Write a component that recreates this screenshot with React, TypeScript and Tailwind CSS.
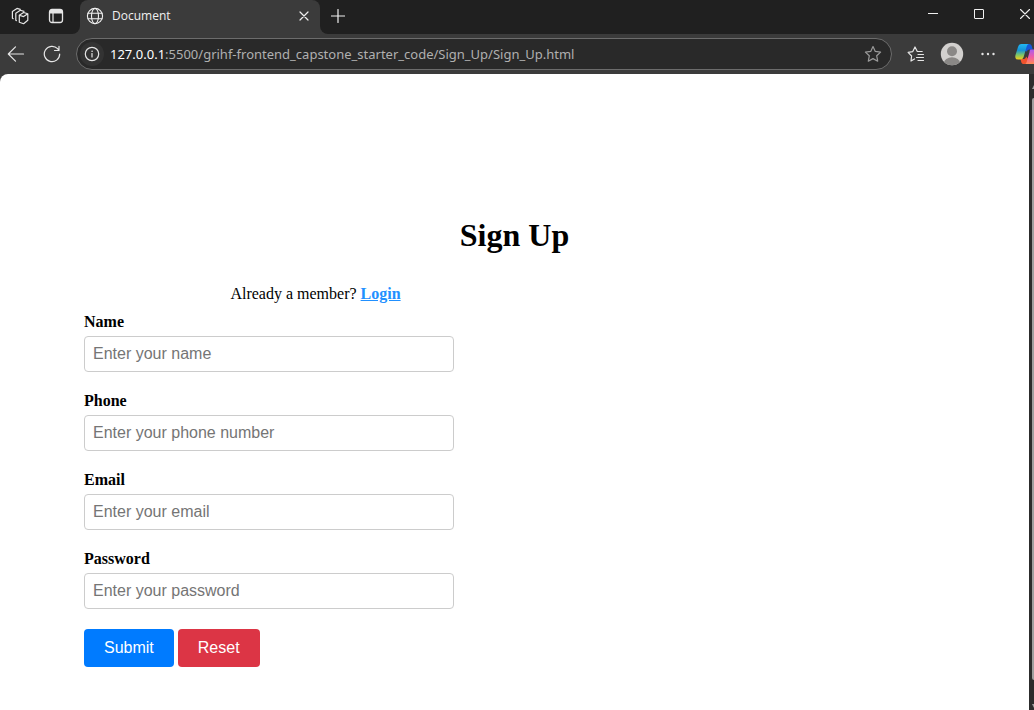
import React from "react";

type IconProps = { className?: string; children: React.ReactNode; size?: number };

function Icon({ className = "", children, size = 18 }: IconProps) {
  return (
    <svg
      width={size}
      height={size}
      viewBox={`0 0 ${size} ${size}`}
      fill="none"
      stroke="currentColor"
      strokeLinecap="round"
      strokeLinejoin="round"
      className={`shrink-0 ${className}`}
      aria-hidden="true"
    >
      {children}
    </svg>
  );
}

const toolButton = "flex h-8 w-9 shrink-0 items-center justify-center text-[#e6e6e6]";

function TabStrip() {
  return (
    <div className="flex h-[34px] bg-[#3b3b3b] text-[#f0f0f0]">
      <div className="flex w-20 shrink-0 items-center rounded-br-lg bg-[#202020] pb-0.5 pl-0.5">
        <button type="button" aria-label="Workspaces" className={toolButton}>
          <Icon>
            <g strokeWidth="1.2">
              <path d="M8.300 8.200 12.600 9.600 16.800 6.800V13.200L12.600 16.700 8.300 15.200ZM8.300 8.200 12.600 5.500 16.800 6.800" />
              <path d="M5.400 13.600 4.800 13.300V6.300L9.400 3.300 13 4.400" />
              <path d="M2.200 11.700 1.400 11.300V4.500L6 1.400 9.300 2.300" />
            </g>
          </Icon>
        </button>
        <button type="button" aria-label="Tab actions" className={toolButton}>
          <Icon>
            <rect x="2.500" y="2.500" width="13" height="13" rx="2.500" strokeWidth="1.300" />
            <path d="M3 4.700h12" strokeWidth="3.600" strokeLinecap="butt" />
            <path d="M6 6v9.500" strokeWidth="1.200" />
          </Icon>
        </button>
      </div>
      <div className="flex w-60 shrink-0 bg-[#202020]">
        <div className="flex flex-1 items-center rounded-t-lg bg-[#3b3b3b] pb-0.5 pl-1.5 pr-2">
          <Icon>
            <g strokeWidth="1.1">
              <circle cx="9" cy="9" r="7.600" />
              <ellipse cx="9" cy="9" rx="3.500" ry="7.600" />
              <path d="M2 6.200h14M2 11.800h14" />
            </g>
          </Icon>
          <span className="ml-2 flex-1 font-['Open_Sans',sans-serif] text-xs">Document</span>
          <button type="button" aria-label="Close tab" className="flex size-4 items-center justify-center">
            <Icon size={10}>
              <path d="m1 1 8 8M9 1 1 9" strokeWidth="1.200" />
            </Icon>
          </button>
        </div>
      </div>
      <div className="flex flex-1 items-center rounded-bl-lg bg-[#202020]">
        <button type="button" aria-label="New tab" className="mb-0.5 flex h-8 w-9 items-center justify-center">
          <Icon size={14}>
            <path d="M7 .500v13M.500 7h13" strokeWidth="1.200" />
          </Icon>
        </button>
        <div className="ml-auto flex h-7 items-center self-start">
          <button type="button" aria-label="Minimize" className="flex h-7 w-[46px] items-center justify-center">
            <Icon size={10}>
              <path d="M0 4.500h10" strokeLinecap="butt" />
            </Icon>
          </button>
          <button type="button" aria-label="Maximize" className="flex h-7 w-[46px] items-center justify-center">
            <Icon size={10}>
              <rect x=".5" y=".5" width="9" height="9" rx=".5" />
            </Icon>
          </button>
          <button type="button" aria-label="Close window" className="flex h-7 w-8 items-center justify-end pr-1">
            <Icon size={10}>
              <path d="m.500.500 9 9M9.500.500l-9 9" strokeWidth="1.100" />
            </Icon>
          </button>
        </div>
      </div>
    </div>
  );
}

function CopilotLogo() {
  return (
    <svg width="19" height="22" viewBox="0 0 19 22" className="shrink-0" aria-hidden="true">
      <defs>
        <linearGradient id="cp-left" x1="0" y1="0" x2="0" y2="1">
          <stop offset="0" stopColor="#22b8f4" />
          <stop offset=".4" stopColor="#1594d8" />
          <stop offset=".7" stopColor="#7cc66a" />
          <stop offset="1" stopColor="#f5cf18" />
        </linearGradient>
        <linearGradient id="cp-right" x1="0" y1="0" x2="0" y2="1">
          <stop offset="0" stopColor="#a65cf0" />
          <stop offset=".5" stopColor="#ef5aa8" />
          <stop offset="1" stopColor="#ff8a55" />
        </linearGradient>
      </defs>
      <path d="M10 1h4c2 0 2.400 1 2.900 2.600l.8 2.800H14.500c-1.500 0-2.200.8-2.600 2.200L10 8Z" fill="#1557d8" />
      <path d="M5.500 16H8.700c1.500 0 2-1 2.500-2.400l2.300 3c-.8 3-1.700 4.400-4 4.400H8C6.500 21 6.100 18.500 5.500 16Z" fill="#f0532d" />
      <path d="M6.500 1H14c-1.400.2-2 1.400-2.400 2.800L8.800 13.500C8.200 15.500 7.400 16.500 5.400 16.500H3C.8 16.500-.2 14.800.5 12L3 4C3.700 2 4.500 1 6.500 1Z" fill="url(#cp-left)" />
      <path d="M15.500 6.500H19V21H9.500c1.300-.3 1.900-1.300 2.300-2.600l2.700-9.200c.2-1.300.4-2.700 1-2.700Z" fill="url(#cp-right)" />
    </svg>
  );
}

function Toolbar() {
  return (
    <div className="flex h-10 items-center bg-[#3b3b3b]">
      <div className="flex w-[76px] shrink-0 items-center">
        <button type="button" aria-label="Back" className="flex h-8 w-8 items-center justify-center text-[#e6e6e6]">
          <Icon>
            <path d="M16.500 9H1.500M8.500 1.800 1.300 9l7.200 7.200" strokeWidth="1.200" />
          </Icon>
        </button>
        <button type="button" aria-label="Refresh" className="flex h-8 w-10 items-center justify-center text-[#e6e6e6]">
          <Icon>
            <path d="M16.700 9A7.700 7.700 0 1 1 14.600 3.700L16 5.500M16 1.300v4.200h-4.500" strokeWidth="1.200" />
          </Icon>
        </button>
      </div>
      <div className="flex h-8 min-w-0 flex-1 items-center rounded-full border border-[#6c6c6c] bg-[#292929] pl-[3px] pr-[9px]">
        <button type="button" aria-label="Site information" className="flex size-6 shrink-0 items-center justify-center rounded-full bg-[#333333] text-[#e6e6e6]">
          <Icon size={16}>
            <circle cx="8" cy="8" r="6.700" strokeWidth="1.200" />
            <path d="M8 7.500v3.500" strokeWidth="1.200" />
            <circle cx="8" cy="5.200" r=".5" fill="currentColor" strokeWidth=".4" />
          </Icon>
        </button>
        <span className="ml-1.5 min-w-0 flex-1 truncate font-['Noto_Sans',sans-serif] text-[13px] leading-5 text-[#b0b0b0]">
          <span className="text-white">127.0.0.1</span>:5500/grihf-frontend_capstone_starter_code/Sign_Up/Sign_Up.html
        </span>
        <button type="button" aria-label="Add to favorites" className="text-[#9a9a9a]">
          <Icon>
            <path d="m9 1.500 2.300 4.900 5.300.700-3.900 3.700 1 5.400L9 13.600l-4.700 2.600 1-5.400L1.400 7.100l5.300-.700Z" strokeWidth="1.200" />
          </Icon>
        </button>
      </div>
      <div className="ml-1.5 flex shrink-0 items-center">
        <button type="button" aria-label="Favorites" className={toolButton}>
          <Icon>
            <path d="M7.500 14 4 16l.600-5L1.100 7.400l4.700-.800L8 2l2.300 4.500h4.900M11 9.500h5.500M9.500 12.500h7M11 15.500h5.500" strokeWidth="1.200" />
          </Icon>
        </button>
        <button type="button" aria-label="Profile" className={toolButton}>
          <svg width="24" height="24" viewBox="0 0 24 24" aria-hidden="true">
            <defs>
              <clipPath id="avatar-disc">
                <circle cx="12" cy="12" r="11.200" />
              </clipPath>
            </defs>
            <circle cx="12" cy="12" r="11.200" fill="#d2d0ce" />
            <circle cx="12" cy="9.300" r="5" fill="#8a8886" />
            <ellipse cx="12" cy="21" rx="8" ry="5.800" fill="#8a8886" clipPath="url(#avatar-disc)" />
          </svg>
        </button>
        <button type="button" aria-label="More" className={toolButton}>
          <Icon>
            <g fill="currentColor" stroke="none">
              <circle cx="3.500" cy="9" r="1.200" />
              <circle cx="9" cy="9" r="1.200" />
              <circle cx="14.500" cy="9" r="1.200" />
            </g>
          </Icon>
        </button>
        <button type="button" aria-label="Copilot" className="flex h-8 w-7 items-center justify-end">
          <CopilotLogo />
        </button>
      </div>
    </div>
  );
}

const fields = [
  { id: "name", label: "Name", type: "text", placeholder: "Enter your name" },
  { id: "phone", label: "Phone", type: "tel", placeholder: "Enter your phone number" },
  { id: "email", label: "Email", type: "email", placeholder: "Enter your email" },
  { id: "password", label: "Password", type: "password", placeholder: "Enter your password" },
];

function SignUp() {
  return (
    <main className="min-w-0 flex-1 rounded-tl-lg bg-white pb-10 pt-[143px] font-['Liberation_Serif',serif] text-base leading-[18px] text-black">
      <h1 className="text-center text-[32px] font-bold leading-9">Sign Up</h1>
      <div className="ml-[84px] mt-8 w-[45%]">
        <p className="text-center">
          Already a member?{" "}
          <a href="#login" className="font-bold text-[#2190ff] underline">
            Login
          </a>
        </p>
        <form className="mt-2.5 w-4/5" onSubmit={(e) => e.preventDefault()}>
          {fields.map((f) => (
            <div key={f.id} className="mb-5">
              <label htmlFor={f.id} className="mb-[5px] block font-bold">
                {f.label}
              </label>
              <input
                id={f.id}
                name={f.id}
                type={f.type}
                placeholder={f.placeholder}
                className="block h-9 w-full rounded border border-[#cccccc] bg-white px-2 font-['Liberation_Sans',sans-serif] text-base placeholder:text-[#757575]"
              />
            </div>
          ))}
          <div className="flex gap-1 font-['Liberation_Sans',sans-serif] text-base text-white">
            <button type="submit" className="h-[38px] rounded bg-[#007bff] px-5">
              Submit
            </button>
            <button type="reset" className="h-[38px] rounded bg-[#dc3545] px-5">
              Reset
            </button>
          </div>
        </form>
      </div>
    </main>
  );
}

function ScrollTrack() {
  return (
    <div className="flex w-[5px] shrink-0 flex-col items-end bg-[#2c2c2c] pb-0.5 pt-2.5" aria-hidden="true">
      <svg width="2" height="6" viewBox="0 0 2 6">
        <path d="M0 5 2 1V5Z" fill="#9f9f9f" />
      </svg>
      <div className="mb-6 mt-2 w-0.5 flex-1 rounded-l-sm bg-[#9f9f9f]" />
      <svg width="2" height="4" viewBox="0 0 2 4">
        <path d="M0 0H2V4Z" fill="#9f9f9f" />
      </svg>
    </div>
  );
}

export default function App() {
  return (
    <div className="flex min-h-screen flex-col bg-[#3b3b3b] font-['Open_Sans',sans-serif]">
      <header>
        <TabStrip />
        <Toolbar />
      </header>
      <div className="flex flex-1">
        <SignUp />
        <ScrollTrack />
      </div>
    </div>
  );
}
